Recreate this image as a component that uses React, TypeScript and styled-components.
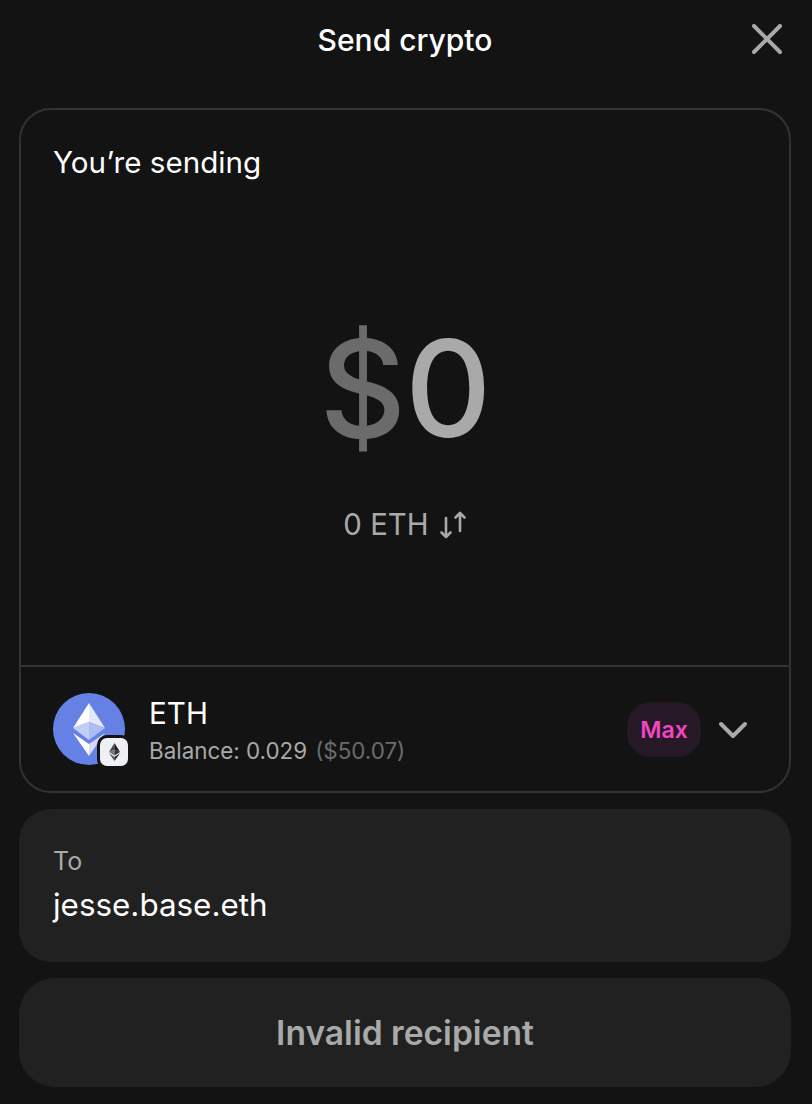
import React from "react";
import styled, { createGlobalStyle } from "styled-components";

const Global = createGlobalStyle`
  html, body { margin: 0; padding: 0; background: #131313; }
  body { font-family: Inter, "Liberation Sans", sans-serif; color: #fff; }
  * { box-sizing: border-box; }
`;

const Page = styled.div`
  width: 812px;
  height: 1104px;
  padding: 0 21px 0 19px;
  background: #131313;
  display: flex;
  flex-direction: column;
  overflow: hidden;
`;

const Header = styled.header`
  height: 108px;
  flex: none;
  display: flex;
  align-items: flex-start;
  justify-content: center;
  position: relative;
`;

const Title = styled.h1`
  margin: 21px 0 0;
  font-size: 30px;
  line-height: 38px;
  font-weight: 500;
  letter-spacing: 0;
`;

const CloseButton = styled.button`
  position: absolute;
  right: 6px;
  top: 21px;
  width: 36px;
  height: 36px;
  padding: 0;
  background: none;
  border: 0;
  display: flex;
  align-items: center;
  justify-content: center;
`;

const Card = styled.section`
  height: 685px;
  flex: none;
  border: 2px solid #323232;
  border-radius: 32px;
  display: flex;
  flex-direction: column;
  width: 772px;
`;

const AmountPanel = styled.div`
  height: 557px;
  flex: none;
  padding: 34px 32px 0;
  border-bottom: 2px solid #323232;
  display: flex;
  flex-direction: column;
`;

const PanelLabel = styled.div`
  font-size: 29.6px;
  line-height: 36px;
  font-weight: 400;
`;

const Amount = styled.div`
  margin-top: 128px;
  text-align: center;
  font-size: 134px;
  line-height: 160px;
  font-weight: 500;
  letter-spacing: -1px;
`;

const Currency = styled.span`
  color: #6b6b6b;
`;

const Digit = styled.span`
  color: #a9a9a9;
`;

const Conversion = styled.div`
  margin-top: 37px;
  display: flex;
  justify-content: center;
  align-items: center;
  gap: 10px;
  font-size: 29.4px;
  line-height: 40px;
  color: #a9a9a9;
`;

const AssetRow = styled.div`
  flex: 1;
  display: flex;
  align-items: center;
  padding: 0 32px;
`;

const TokenIcon = styled.div`
  width: 72px;
  height: 72px;
  flex: none;
  position: relative;
`;

const NetworkBadge = styled.div`
  position: absolute;
  right: -6px;
  bottom: -4px;
  width: 34px;
  height: 34px;
  border-radius: 10px;
  background: #eef0f3;
  border: 3px solid #131313;
  display: flex;
  align-items: center;
  justify-content: center;
`;

const AssetInfo = styled.div`
  margin-left: 24px;
  padding-top: 2px;
  flex: 1;
  display: flex;
  flex-direction: column;
`;

const AssetName = styled.div`
  font-size: 29.6px;
  line-height: 36px;
`;

const Balance = styled.div`
  font-size: 22.4px;
  line-height: 30px;
  margin-top: 5px;
  color: #a9a9a9;
  display: flex;
  gap: 8px;
`;

const Fiat = styled.span`
  color: #6b6b6b;
`;

const MaxButton = styled.button`
  width: 74px;
  height: 55px;
  padding: 2px 0 0;
  border: 0;
  border-radius: 24px;
  background: #261825;
  color: #ef46c4;
  font: 600 23px Inter, sans-serif;
`;

const Chevron = styled.div`
  margin: 2px 8px 0 16px;
  width: 32px;
  height: 32px;
  display: flex;
  align-items: center;
  justify-content: center;
`;

const RecipientBox = styled.div`
  margin-top: 16px;
  height: 153px;
  flex: none;
  width: 772px;
  background: #212121;
  border-radius: 32px;
  padding: 34px 34px 0;
`;

const RecipientLabel = styled.div`
  font-size: 25px;
  line-height: 36px;
  color: #a9a9a9;
`;

const RecipientValue = styled.div`
  margin-top: 6px;
  font-size: 31.4px;
  line-height: 40px;
`;

const SubmitButton = styled.button`
  margin-top: 16px;
  height: 109px;
  width: 772px;
  flex: none;
  border: 0;
  border-radius: 36px;
  background: #212121;
  color: #a9a9a9;
  font: 600 33.6px Inter, sans-serif;
`;

export default function App() {
  return (
    <>
      <Global />
      <Page>
        <Header>
          <Title>Send crypto</Title>
          <CloseButton aria-label="Close">
            <svg width="30" height="30" viewBox="0 0 30 30" fill="none">
              <path d="M2 2 L28 28 M28 2 L2 28" stroke="#a9a9a9" strokeWidth="4" strokeLinecap="round" />
            </svg>
          </CloseButton>
        </Header>
        <Card>
          <AmountPanel>
            <PanelLabel>You’re sending</PanelLabel>
            <Amount>
              <Currency>$</Currency>
              <Digit>0</Digit>
            </Amount>
            <Conversion>
              <span>0 ETH</span>
              <svg width="28" height="28" viewBox="0 0 28 28" fill="none" stroke="#a9a9a9" strokeWidth="2.6" strokeLinecap="round" strokeLinejoin="round">
                <path d="M7 7 V26 M2.500 21.500 L7 26 L11.500 21.500" />
                <path d="M21 20 V2 M16.500 6.500 L21 2 L25.500 6.500" />
              </svg>
            </Conversion>
          </AmountPanel>
          <AssetRow>
            <TokenIcon>
              <svg width="72" height="72" viewBox="0 0 72 72">
                <circle cx="36" cy="36" r="36" fill="#6681e6" />
                <path d="M36 10 L20 35 L36 29 Z" fill="#fff" />
                <path d="M36 10 L52 35 L36 29 Z" fill="#e3e8fb" />
                <path d="M36 29 L20 35 L36 47 Z" fill="#c3cef6" />
                <path d="M36 29 L52 35 L36 47 Z" fill="#aebcf1" />
                <path d="M20 40 L36 63 L36 51 Z" fill="#fff" />
                <path d="M52 40 L36 63 L36 51 Z" fill="#d3dbf8" />
              </svg>
              <NetworkBadge>
                <svg width="11" height="18" viewBox="0 0 14 20" preserveAspectRatio="none">
                  <path d="M7 0 L0 10 L7 7.500 Z" fill="#4a4a4a" />
                  <path d="M7 0 L14 10 L7 7.500 Z" fill="#1c1c1c" />
                  <path d="M7 7.500 L0 10 L7 14 Z" fill="#777" />
                  <path d="M7 7.500 L14 10 L7 14 Z" fill="#333" />
                  <path d="M0 11.500 L7 20 L7 15.500 Z" fill="#555" />
                  <path d="M14 11.500 L7 20 L7 15.500 Z" fill="#222" />
                </svg>
              </NetworkBadge>
            </TokenIcon>
            <AssetInfo>
              <AssetName>ETH</AssetName>
              <Balance>
                <span>Balance: 0.029</span>
                <Fiat>($50.07)</Fiat>
              </Balance>
            </AssetInfo>
            <MaxButton>Max</MaxButton>
            <Chevron>
              <svg width="30" height="18" viewBox="0 0 30 18" fill="none">
                <path d="M3 3 L15 15 L27 3" stroke="#a9a9a9" strokeWidth="4" strokeLinecap="round" strokeLinejoin="round" />
              </svg>
            </Chevron>
          </AssetRow>
        </Card>
        <RecipientBox>
          <RecipientLabel>To</RecipientLabel>
          <RecipientValue>jesse.base.eth</RecipientValue>
        </RecipientBox>
        <SubmitButton>Invalid recipient</SubmitButton>
      </Page>
    </>
  );
}
